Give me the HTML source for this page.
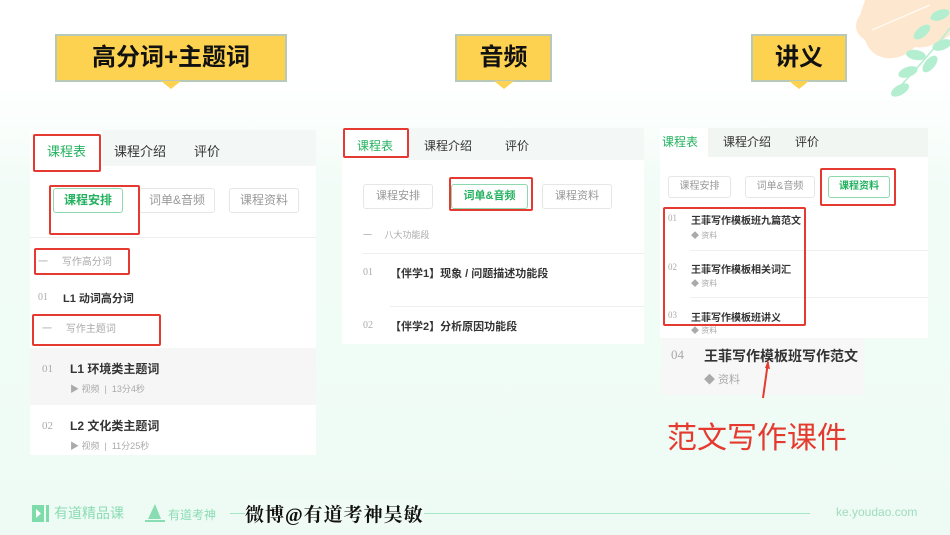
<!DOCTYPE html>
<html><head><meta charset="utf-8"><style>
*{margin:0;padding:0;box-sizing:border-box}
body{width:950px;height:535px;overflow:hidden;position:relative;font-family:"Liberation Sans","Noto Sans CJK SC",sans-serif;background:linear-gradient(180deg,#ffffff 0%,#ffffff 15%,#f2fcf7 35%,#eefbf4 100%)}
.a{position:absolute;white-space:nowrap}
.lab{position:absolute;background:#fdd251;border:2px solid #b9c9b8;font-weight:bold;color:#111;text-align:center;font-size:24px;line-height:44px}
.lab:after{content:"";position:absolute;left:50%;bottom:-9px;margin-left:-10px;border-left:10px solid transparent;border-right:10px solid transparent;border-top:8px solid #fdd251}
.red{position:absolute;border:2px solid #e43a32;border-radius:2px}
.btn{position:absolute;border:1px solid #e6e6e6;border-radius:3px;color:#999;text-align:center;background:#fff}
.btn.g{border-color:#8fd7ad;color:#23b25f;font-weight:bold}
.tab{position:absolute;color:#333}
.gr{color:#23b25f}
.n{color:#aaa;font-family:"Liberation Serif",serif}
.b{font-weight:bold;color:#333}
.m{color:#aaa}
</style></head><body>
<!-- leaves -->
<svg class="a" style="left:830px;top:0" width="120" height="110" viewBox="0 0 120 110">
<path d="M35 0 L120 0 L120 35 Q100 50 85 47 Q72 60 55 58 Q40 55 35 40 Q20 30 30 15 Z" fill="#fde8cf"/>
<line x1="42" y1="30" x2="100" y2="5" stroke="#fff" stroke-width="1"/>
<path d="M120 28 Q100 55 62 95" stroke="#b4eed0" stroke-width="1.5" fill="none"/>
<g fill="#b4eed0">
<ellipse cx="110" cy="15" rx="10" ry="5" transform="rotate(-20 110 15)"/>
<ellipse cx="92" cy="32" rx="10" ry="5" transform="rotate(-40 92 32)"/>
<ellipse cx="112" cy="45" rx="10" ry="5" transform="rotate(-20 112 45)"/>
<ellipse cx="86" cy="55" rx="10" ry="5" transform="rotate(10 86 55)"/>
<ellipse cx="100" cy="64" rx="10" ry="5" transform="rotate(-50 100 64)"/>
<ellipse cx="78" cy="72" rx="10" ry="5" transform="rotate(-20 78 72)"/>
<ellipse cx="70" cy="90" rx="10" ry="5" transform="rotate(-30 70 90)"/>
</g></svg>

<div class="lab" style="left:55px;top:34px;width:232px;height:48px">高分词+主题词</div>
<div class="lab" style="left:455px;top:34px;width:97px;height:48px">音频</div>
<div class="lab" style="left:751px;top:34px;width:96px;height:48px">讲义</div>

<!-- left panel -->
<div class="a" style="left:30px;top:130px;width:286px;height:325px;background:#fff"></div>
<div class="a" style="left:30px;top:130px;width:286px;height:36px;background:#f3f7f5"></div>
<div class="a" style="left:30px;top:130px;width:72px;height:36px;background:#fff"></div>
<div class="tab gr" style="left:47px;top:141px;font-size:13px">课程表</div>
<div class="tab" style="left:114px;top:141px;font-size:13px">课程介绍</div>
<div class="tab" style="left:194px;top:141px;font-size:13px">评价</div>
<div class="red" style="left:33px;top:134px;width:68px;height:38px"></div>
<div class="btn g" style="left:53px;top:188px;width:70px;height:25px;font-size:12px;line-height:23px">课程安排</div>
<div class="btn" style="left:139px;top:188px;width:76px;height:25px;font-size:12px;line-height:23px">词单&amp;音频</div>
<div class="btn" style="left:229px;top:188px;width:70px;height:25px;font-size:12px;line-height:23px">课程资料</div>
<div class="red" style="left:49px;top:185px;width:91px;height:50px"></div>
<div class="a" style="left:30px;top:237px;width:286px;height:1px;background:#eee"></div>
<div class="a m" style="left:38px;top:253px;font-size:10px">一&nbsp;&nbsp;&nbsp;&nbsp;&nbsp;写作高分词</div>
<div class="red" style="left:34px;top:248px;width:96px;height:27px"></div>
<div class="a n" style="left:38px;top:292px;font-size:10px">01</div>
<div class="a b" style="left:63px;top:290px;font-size:11px">L1 动词高分词</div>
<div class="a m" style="left:42px;top:320px;font-size:10px">一&nbsp;&nbsp;&nbsp;&nbsp;&nbsp;写作主题词</div>
<div class="red" style="left:32px;top:314px;width:129px;height:32px"></div>
<div class="a" style="left:30px;top:348px;width:286px;height:57px;background:#f6f6f6"></div>
<div class="a n" style="left:42px;top:363px;font-size:11px">01</div>
<div class="a b" style="left:70px;top:360px;font-size:12px">L1 环境类主题词</div>
<div class="a m" style="left:70px;top:382px;font-size:9px">▶ 视频 &nbsp;| &nbsp;13分4秒</div>
<div class="a n" style="left:42px;top:420px;font-size:11px">02</div>
<div class="a b" style="left:70px;top:417px;font-size:12px">L2 文化类主题词</div>
<div class="a m" style="left:70px;top:439px;font-size:9px">▶ 视频 &nbsp;| &nbsp;11分25秒</div>

<!-- middle panel -->
<div class="a" style="left:342px;top:128px;width:302px;height:216px;background:#fff"></div>
<div class="a" style="left:342px;top:128px;width:302px;height:32px;background:#f3f7f5"></div>
<div class="a" style="left:342px;top:128px;width:66px;height:32px;background:#fff"></div>
<div class="tab gr" style="left:357px;top:137px;font-size:12px">课程表</div>
<div class="tab" style="left:424px;top:137px;font-size:12px">课程介绍</div>
<div class="tab" style="left:505px;top:137px;font-size:12px">评价</div>
<div class="red" style="left:343px;top:128px;width:66px;height:30px"></div>
<div class="btn" style="left:363px;top:184px;width:70px;height:25px;font-size:11px;line-height:23px">课程安排</div>
<div class="btn g" style="left:451px;top:184px;width:77px;height:25px;font-size:11px;line-height:23px">词单&amp;音频</div>
<div class="btn" style="left:542px;top:184px;width:70px;height:25px;font-size:11px;line-height:23px">课程资料</div>
<div class="red" style="left:449px;top:177px;width:84px;height:34px"></div>
<div class="a m" style="left:363px;top:228px;font-size:9px">一&nbsp;&nbsp;&nbsp;&nbsp;&nbsp;八大功能段</div>
<div class="a" style="left:363px;top:253px;width:281px;height:1px;background:#eee"></div>
<div class="a n" style="left:363px;top:267px;font-size:10px">01</div>
<div class="a b" style="left:390px;top:265px;font-size:11px">【伴学1】现象 / 问题描述功能段</div>
<div class="a" style="left:390px;top:306px;width:254px;height:1px;background:#eee"></div>
<div class="a n" style="left:363px;top:320px;font-size:10px">02</div>
<div class="a b" style="left:390px;top:318px;font-size:11px">【伴学2】分析原因功能段</div>

<!-- right panel -->
<div class="a" style="left:660px;top:128px;width:268px;height:210px;background:#fff"></div>
<div class="a" style="left:708px;top:128px;width:220px;height:29px;background:#f1f6f3"></div>
<div class="tab gr" style="left:662px;top:133px;font-size:12px">课程表</div>
<div class="tab" style="left:723px;top:133px;font-size:12px">课程介绍</div>
<div class="tab" style="left:795px;top:133px;font-size:12px">评价</div>
<div class="btn" style="left:668px;top:176px;width:63px;height:22px;font-size:10px;line-height:20px">课程安排</div>
<div class="btn" style="left:745px;top:176px;width:70px;height:22px;font-size:10px;line-height:20px">词单&amp;音频</div>
<div class="btn g" style="left:828px;top:176px;width:62px;height:22px;font-size:10px;line-height:20px">课程资料</div>
<div class="red" style="left:820px;top:168px;width:76px;height:38px"></div>
<div class="a n" style="left:668px;top:213px;font-size:9px">01</div>
<div class="a b" style="left:691px;top:212px;font-size:10px">王菲写作模板班九篇范文</div>
<div class="a m" style="left:691px;top:230px;font-size:8px">◆ 资料</div>
<div class="a" style="left:690px;top:250px;width:238px;height:1px;background:#f0f0f0"></div>
<div class="a n" style="left:668px;top:262px;font-size:9px">02</div>
<div class="a b" style="left:691px;top:261px;font-size:10px">王菲写作模板相关词汇</div>
<div class="a m" style="left:691px;top:278px;font-size:8px">◆ 资料</div>
<div class="a" style="left:690px;top:297px;width:238px;height:1px;background:#f0f0f0"></div>
<div class="a n" style="left:668px;top:310px;font-size:9px">03</div>
<div class="a b" style="left:691px;top:309px;font-size:10px">王菲写作模板班讲义</div>
<div class="a m" style="left:691px;top:325px;font-size:8px">◆ 资料</div>
<div class="red" style="left:663px;top:207px;width:143px;height:119px"></div>
<div class="a" style="left:662px;top:338px;width:202px;height:57px;background:#f7f7f7"></div>
<div class="a n" style="left:671px;top:347px;font-size:13px">04</div>
<div class="a b" style="left:704px;top:346px;font-size:14px">王菲写作模板班写作范文</div>
<div class="a m" style="left:704px;top:371px;font-size:11px">◆ 资料</div>
<svg class="a" style="left:758px;top:358px" width="16" height="42"><path d="M5 40 L10 4" stroke="#e43a32" stroke-width="2"/><path d="M7 10 L10 2 L12 11 Z" fill="#e43a32"/></svg>
<div class="a" style="left:667px;top:421px;font-size:30px;color:#e53a30;line-height:36px">范文写作课件</div>

<!-- footer -->
<div class="a" style="left:230px;top:513px;width:580px;height:1px;background:#a8e6c8"></div>
<svg class="a" style="left:31px;top:503px" width="20" height="20"><path d="M1 2 L13 2 L13 19 L1 19 Z" fill="#7ddcaa"/><path d="M5 6 L10 10.5 L5 15 Z" fill="#fff"/><rect x="15" y="2" width="3" height="17" fill="#7ddcaa"/></svg>
<div class="a" style="left:54px;top:503px;font-size:14px;color:#8adcb2">有道精品课</div>
<svg class="a" style="left:144px;top:503px" width="22" height="20"><path d="M11 1 L17 16 L4 16 Z" fill="#8adcb2"/><path d="M1 18 L21 18" stroke="#8adcb2" stroke-width="2"/></svg>
<div class="a" style="left:168px;top:506px;font-size:12px;color:#8adcb2">有道考神</div>
<div class="a" style="left:245px;top:500px;font-size:19px;color:#111;font-weight:bold;font-family:'Liberation Serif','Noto Serif CJK SC',serif;letter-spacing:1px;background:#f0fbf5">微博@有道考神吴敏</div>
<div class="a" style="left:836px;top:505px;font-size:12px;color:#9fdcbe">ke.youdao.com</div>
</body></html>
